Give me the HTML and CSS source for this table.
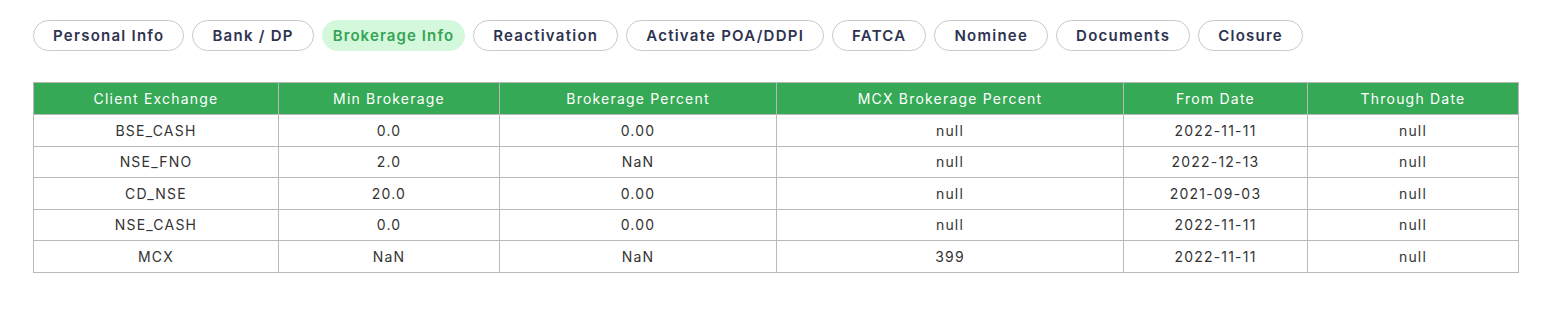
FILE: index.html
```html
<!DOCTYPE html>
<html lang="en">
<head>
<meta charset="utf-8">
<title>Brokerage Info</title>
<link rel="stylesheet" href="styles.css">
</head>
<body>
<div class="page">
  <nav class="tabs">
    <button class="tab">Personal Info</button>
    <button class="tab">Bank / DP</button>
    <button class="tab active">Brokerage Info</button>
    <button class="tab">Reactivation</button>
    <button class="tab">Activate POA/DDPI</button>
    <button class="tab">FATCA</button>
    <button class="tab">Nominee</button>
    <button class="tab">Documents</button>
    <button class="tab">Closure</button>
  </nav>
  <table class="grid">
    <colgroup>
      <col class="c1"><col class="c2"><col class="c3"><col class="c4"><col class="c5"><col class="c6">
    </colgroup>
    <thead>
      <tr>
        <th>Client Exchange</th>
        <th>Min Brokerage</th>
        <th>Brokerage Percent</th>
        <th>MCX Brokerage Percent</th>
        <th>From Date</th>
        <th>Through Date</th>
      </tr>
    </thead>
    <tbody>
      <tr><td>BSE_CASH</td><td>0.0</td><td>0.00</td><td>null</td><td>2022-11-11</td><td>null</td></tr>
      <tr><td>NSE_FNO</td><td>2.0</td><td>NaN</td><td>null</td><td>2022-12-13</td><td>null</td></tr>
      <tr><td>CD_NSE</td><td>20.0</td><td>0.00</td><td>null</td><td>2021-09-03</td><td>null</td></tr>
      <tr><td>NSE_CASH</td><td>0.0</td><td>0.00</td><td>null</td><td>2022-11-11</td><td>null</td></tr>
      <tr><td>MCX</td><td>NaN</td><td>NaN</td><td>399</td><td>2022-11-11</td><td>null</td></tr>
    </tbody>
  </table>
</div>
</body>
</html>
```
FILE: styles.css
```css
* { box-sizing: border-box; }
html, body { margin: 0; background: #fff; }
body { font-family: Inter, "Open Sans", sans-serif; }
.page { padding: 20px 47px 0 33px; }
.tabs { display: flex; gap: 8px; }
.tab {
  font-family: inherit;
  height: 31px;
  padding: 0 19px;
  border: 1px solid #c9c9c9;
  border-radius: 16px;
  background: #fff;
  color: #2e3350;
  font-size: 15px;
  font-weight: 600;
  letter-spacing: 1.25px;
  line-height: 29px;
  cursor: pointer;
}
.tab.active {
  padding: 0 10px;
  background: #d3f8dc;
  border-color: #d3f8dc;
  color: #35a455;
  letter-spacing: 1.1px;
}
.grid {
  margin-top: 31px;
  width: 1485px;
  border-collapse: collapse;
  table-layout: fixed;
  font-size: 14px;
  letter-spacing: 1.2px;
}
.c1 { width: 245px; }
.c2 { width: 221px; }
.c3 { width: 277px; }
.c4 { width: 347px; }
.c5 { width: 184px; }
.c6 { width: 211px; }
.grid th, .grid td {
  border: 1px solid #b9b9b9;
  text-align: center;
  padding: 0;
}
.grid th {
  background: #35a955;
  color: #fff;
  font-weight: 400;
  height: 32px;
}
.grid td {
  color: #333;
  height: 31.5px;
}
```
